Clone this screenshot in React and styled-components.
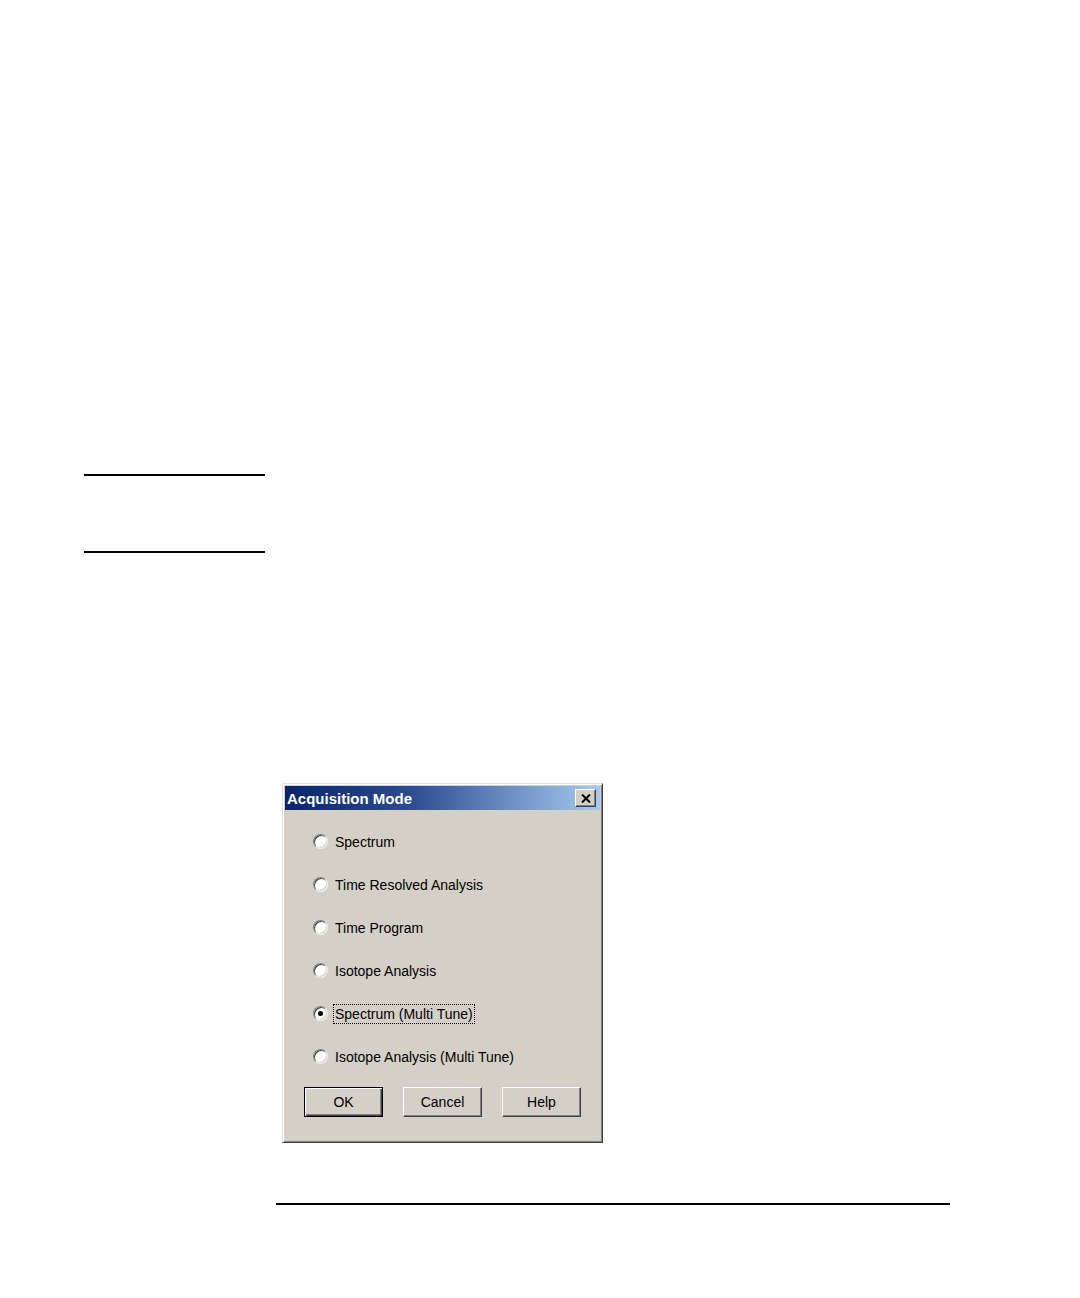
import styled, { createGlobalStyle } from 'styled-components'

const GlobalStyle = createGlobalStyle`
  html, body {
    margin: 0;
    padding: 0;
    background: #fff;
  }
`

const modes = [
    'Spectrum',
    'Time Resolved Analysis',
    'Time Program',
    'Isotope Analysis',
    'Spectrum (Multi Tune)',
    'Isotope Analysis (Multi Tune)',
]

const selected = 4

const App = () => {
    return (
        <Page>
            <GlobalStyle />
            <MarginNote />
            <Dialog>
                <TitleBar>
                    <Title>Acquisition Mode</Title>
                    <CloseButton aria-label="close">
                        <svg width="10" height="9" viewBox="0 0 10 9">
                            <path d="M1 0.5 L9 8.5 M9 0.5 L1 8.5" stroke="#000" strokeWidth="2" />
                        </svg>
                    </CloseButton>
                </TitleBar>
                <Body>
                    <ModeList>
                        {modes.map((m, i) => (
                            <ModeRow key={m}>
                                <Radio checked={i === selected} />
                                <Label focused={i === selected}>{m}</Label>
                            </ModeRow>
                        ))}
                    </ModeList>
                    <Buttons>
                        <Button primary>OK</Button>
                        <Button>Cancel</Button>
                        <Button>Help</Button>
                    </Buttons>
                </Body>
            </Dialog>
            <FooterRule />
        </Page>
    )
}

const Page = styled.div`
  width: 1080px;
  height: 1298px;
  box-sizing: border-box;
  padding-top: 474px;
  display: flex;
  flex-direction: column;
  align-items: flex-start;
`

const MarginNote = styled.div`
  margin-left: 84px;
  width: 181px;
  height: 75px;
  border-top: 2px solid #000;
  border-bottom: 2px solid #000;
`

const Dialog = styled.div`
  margin-top: 230px;
  margin-left: 282px;
  width: 321px;
  height: 360px;
  box-sizing: border-box;
  background: #d4d0c8;
  border: 1px solid;
  border-color: #e4e2dc #404040 #404040 #e4e2dc;
  box-shadow: inset 1px 1px 0 #fff, inset -1px -1px 0 #808080;
  padding: 2px;
  display: flex;
  flex-direction: column;
  font-family: "Liberation Sans", Arial, sans-serif;
`

const TitleBar = styled.div`
  height: 24px;
  display: flex;
  align-items: center;
  justify-content: space-between;
  padding: 0 4px 0 2px;
  background: linear-gradient(to right, #0a246a 0%, #2d4d90 40%, #a6caf0 100%);
`

const Title = styled.span`
  color: #fff;
  font-weight: bold;
  font-size: 15px;
`

const CloseButton = styled.button`
  width: 21px;
  height: 18px;
  padding: 0;
  display: flex;
  align-items: center;
  justify-content: center;
  background: #d4d0c8;
  border: 1px solid;
  border-color: #fff #404040 #404040 #fff;
  box-shadow: inset -1px -1px 0 #808080;
`

const Body = styled.div`
  flex: 1;
  display: flex;
  flex-direction: column;
  padding: 10px 0 0 19px;
`

const ModeList = styled.div`
  display: flex;
  flex-direction: column;
  padding-left: 9px;
`

const ModeRow = styled.div`
  height: 43px;
  display: flex;
  align-items: center;
  gap: 6px;
  font-size: 14px;
  color: #000;
`

const Radio = styled.span`
  position: relative;
  width: 15px;
  height: 15px;
  box-sizing: border-box;
  border-radius: 50%;
  background: #fff;
  border: 1px solid;
  border-color: #808080 #f0eee8 #f0eee8 #808080;
  box-shadow: inset 1px 1px 0 #404040, inset -1px -1px 0 #d4d0c8;
  flex-shrink: 0;

  &::after {
    content: '';
    display: ${p => (p.checked ? 'block' : 'none')};
    position: absolute;
    left: 4px;
    top: 4px;
    width: 5px;
    height: 5px;
    border-radius: 50%;
    background: #000;
  }
`

const Label = styled.span`
  padding: 0 1px;
  line-height: 18px;
  outline: ${p => (p.focused ? '1px dotted #000' : 'none')};
`

const Buttons = styled.div`
  margin-top: 9px;
  display: flex;
  gap: 20px;
`

const Button = styled.button`
  width: 79px;
  height: 30px;
  box-sizing: border-box;
  background: #d4d0c8;
  font-family: "Liberation Sans", Arial, sans-serif;
  font-size: 14px;
  color: #000;
  padding: 0;
  border: 1px solid;
  border-color: ${p => (p.primary ? '#000' : '#fff #404040 #404040 #fff')};
  box-shadow: ${p =>
        p.primary
            ? 'inset 1px 1px 0 #fff, inset -1px -1px 0 #404040, inset -2px -2px 0 #808080'
            : 'inset -1px -1px 0 #808080'};
`

const FooterRule = styled.div`
  margin-top: 60px;
  margin-left: 276px;
  width: 674px;
  border-top: 2px solid #000;
`

export default App
